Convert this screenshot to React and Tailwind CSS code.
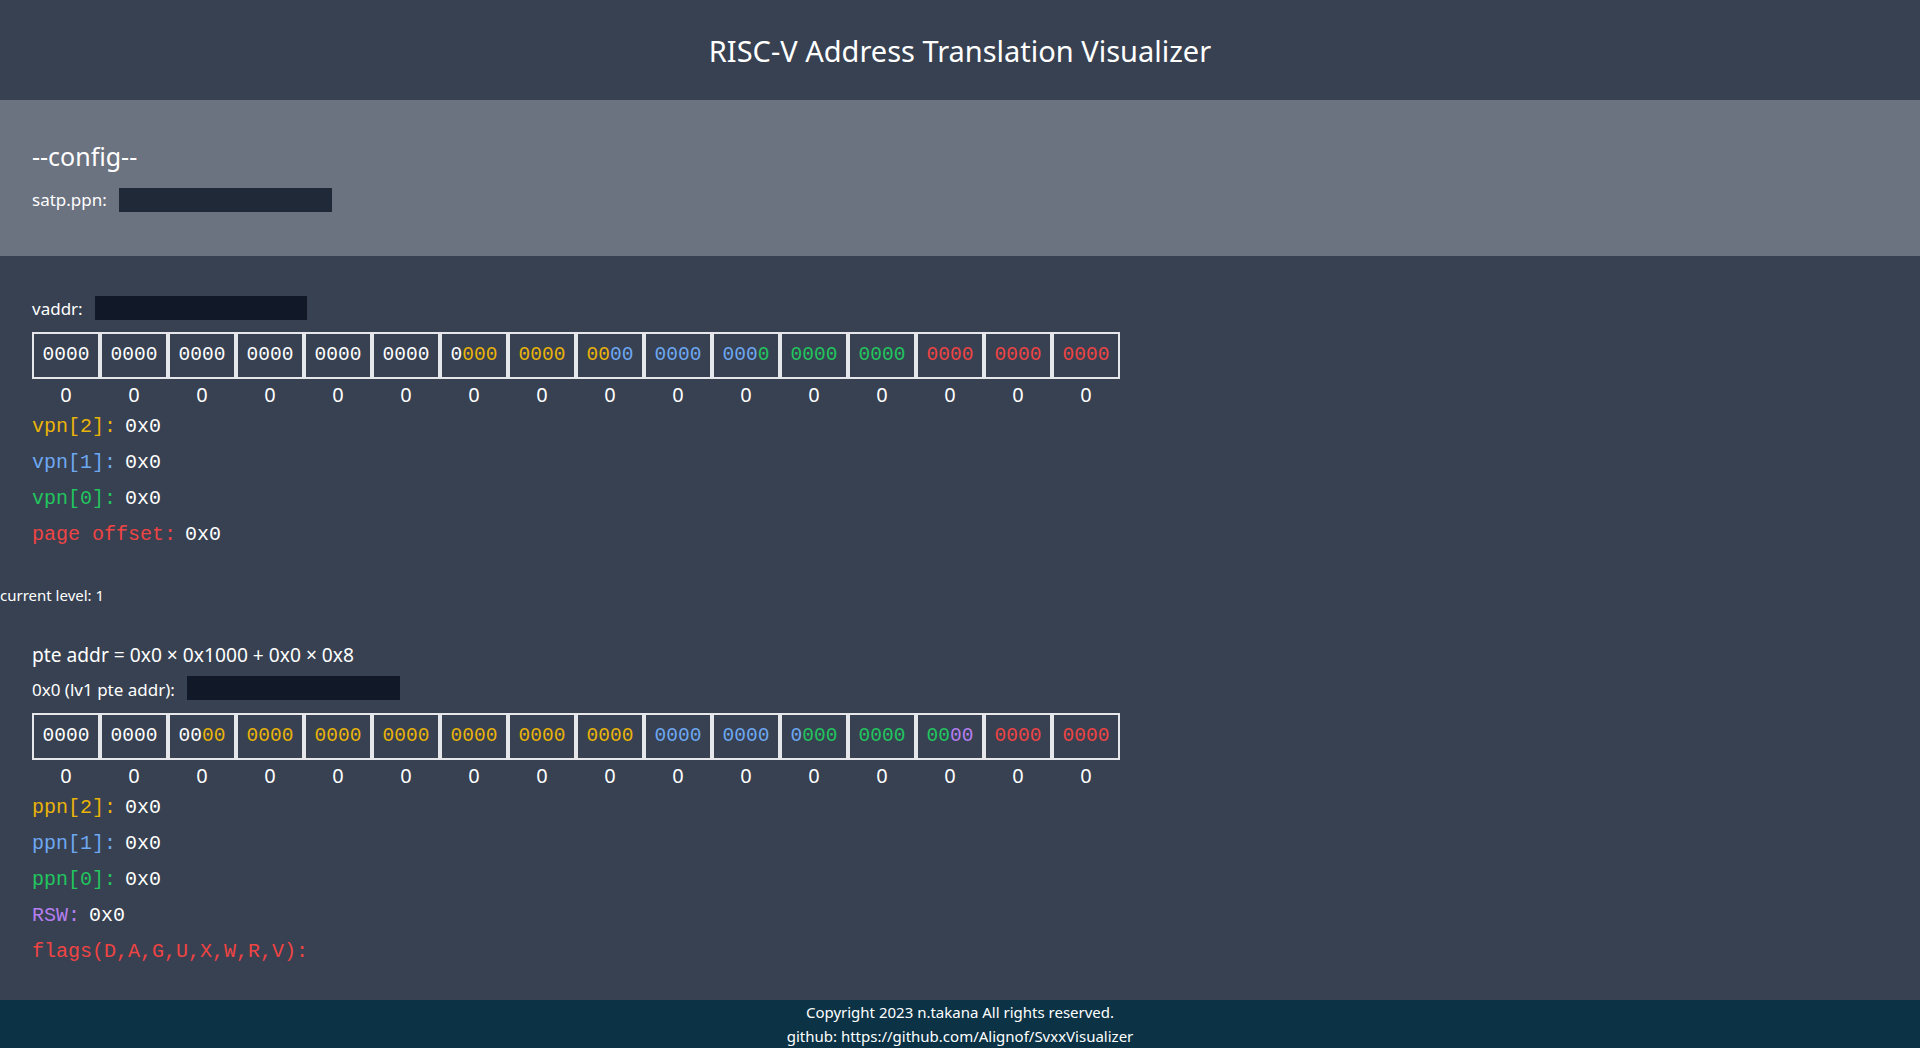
import React from "react";

const COLORS = {
  white: "text-white",
  yellow: "text-[#eab308]",
  blue: "text-[#6ea8f2]",
  green: "text-[#22c55e]",
  red: "text-[#ef4444]",
  purple: "text-[#b57ef0]",
};

function colorOf(bit, ranges) {
  for (const [hi, lo, c] of ranges) {
    if (bit <= hi && bit >= lo) return COLORS[c];
  }
  return COLORS.white;
}

function BitTable({ ranges }) {
  const cells = Array.from({ length: 16 }, (_, i) => i);
  return (
    <div>
      <div className="flex">
        {cells.map((i) => (
          <div
            key={i}
            className="flex w-[68px] h-[47px] items-center justify-center border-2 border-[#e5e7eb] font-['Liberation_Mono',monospace] text-[19.5px]"
          >
            {[0, 1, 2, 3].map((j) => {
              const bit = 63 - i * 4 - j;
              return (
                <span key={j} className={colorOf(bit, ranges)}>
                  0
                </span>
              );
            })}
          </div>
        ))}
      </div>
      <div className="flex">
        {cells.map((i) => (
          <div key={i} className="w-[68px] h-7 pt-[3px] flex items-center justify-center text-[20px] text-white">
            0
          </div>
        ))}
      </div>
    </div>
  );
}

function Field({ label, color, value }) {
  return (
    <div className="h-9 pt-[3px] flex items-center font-['Liberation_Mono',monospace] text-[20px] whitespace-pre">
      <span className={color}>{label}</span>
      <span className="ml-[9px] text-white">{value}</span>
    </div>
  );
}

export default function App() {
  const vaddrRanges = [
    [38, 30, "yellow"],
    [29, 21, "blue"],
    [20, 12, "green"],
    [11, 0, "red"],
  ];
  const pteRanges = [
    [53, 28, "yellow"],
    [27, 19, "blue"],
    [18, 10, "green"],
    [9, 8, "purple"],
    [7, 0, "red"],
  ];
  return (
    <div className="min-h-[1048px] flex flex-col bg-[#374151] text-white font-['Noto_Sans',sans-serif]">
      <header className="h-[100px] flex items-center justify-center bg-[#374151]">
        <h1 className="text-[29px] font-normal leading-none">RISC-V Address Translation Visualizer</h1>
      </header>

      <section className="bg-[#6b7280] px-8 pt-[41px] pb-[44px]">
        <h2 className="text-[25px] leading-[30px] font-normal">--config--</h2>
        <div className="mt-[17px] h-6 flex items-center gap-3 text-[17px]">
          <span>satp.ppn:</span>
          <input className="w-[213px] h-6 bg-[#1f2937] border-0 outline-none" />
        </div>
      </section>

      <main className="flex-1 pt-10 pb-8">
        <div className="px-8">
          <div className="h-6 flex items-center gap-3 text-[17px]">
            <span className="pt-[2px]">vaddr:</span>
            <input className="w-[212px] h-6 bg-[#111827] border-0 outline-none" />
          </div>
          <div className="mt-3">
            <BitTable ranges={vaddrRanges} />
          </div>
          <Field label="vpn[2]:" color={COLORS.yellow} value="0x0" />
          <Field label="vpn[1]:" color={COLORS.blue} value="0x0" />
          <Field label="vpn[0]:" color={COLORS.green} value="0x0" />
          <Field label="page offset:" color={COLORS.red} value="0x0" />
        </div>

        <div className="mt-[34px] h-5 pt-[1px] flex items-center text-[15px]">current level: 1</div>

        <div className="px-8">
          <div className="mt-[36px] h-7 flex items-center text-[19.2px]">
            pte addr = 0x0 × 0x1000 + 0x0 × 0x8
          </div>
          <div className="mt-[7px] h-6 flex items-center gap-3 text-[17px]">
            <span className="pt-[3px]">0x0 (lv1 pte addr):</span>
            <input className="w-[213px] h-6 bg-[#111827] border-0 outline-none" />
          </div>
          <div className="mt-[13px]">
            <BitTable ranges={pteRanges} />
          </div>
          <Field label="ppn[2]:" color={COLORS.yellow} value="0x0" />
          <Field label="ppn[1]:" color={COLORS.blue} value="0x0" />
          <Field label="ppn[0]:" color={COLORS.green} value="0x0" />
          <Field label="RSW:" color={COLORS.purple} value="0x0" />
          <div className="h-9 pt-[3px] flex items-center font-['Liberation_Mono',monospace] text-[20px]">
            <span className={COLORS.red}>flags(D,A,G,U,X,W,R,V):</span>
          </div>
        </div>
      </main>

      <footer className="h-12 bg-[#0b3245] text-center text-[15px] leading-6">
        <div>Copyright 2023 n.takana All rights reserved.</div>
        <div>github: https://github.com/Alignof/SvxxVisualizer</div>
      </footer>
    </div>
  );
}
